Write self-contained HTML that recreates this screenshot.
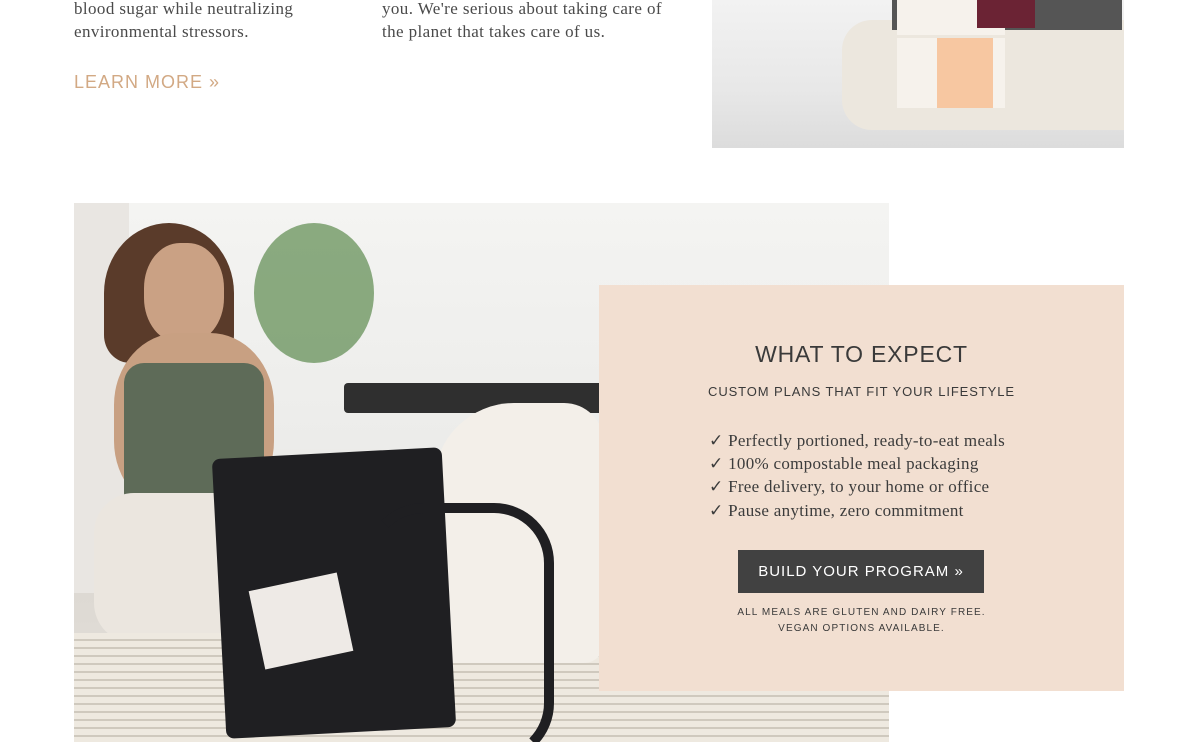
<!DOCTYPE html>
<html><head><style>
body{margin:0;width:1200px;height:742px;background:#fff;position:relative;overflow:hidden;font-family:"Liberation Serif",serif;color:#444}
.p{position:absolute;font-size:17px;line-height:23px;letter-spacing:.4px;color:#4a4a4a}
.sans{font-family:"Liberation Sans",sans-serif}
</style></head><body>
<div class="p" style="left:74px;top:-3px">blood sugar while neutralizing<br>environmental stressors.</div>
<div class="p" style="left:382px;top:-3px">you. We're serious about taking care of<br>the planet that takes care of us.</div>
<div class="sans" style="position:absolute;left:74px;top:72px;font-size:18px;letter-spacing:1px;color:#d2a984">LEARN MORE »</div>
<!-- top right photo -->
<div style="position:absolute;left:712px;top:0;width:412px;height:148px;background:linear-gradient(180deg,#f2f2f2,#e8e8e8 60%,#dcdcdc);overflow:hidden">
<div style="position:absolute;left:130px;top:20px;width:290px;height:110px;background:#ece7de;border-radius:30px 0 0 30px"></div>
<div style="position:absolute;left:180px;top:0;width:230px;height:30px;background:#555"></div>
<div style="position:absolute;left:185px;top:0;width:108px;height:35px;background:#f6f2ec"></div>
<div style="position:absolute;left:265px;top:0;width:58px;height:28px;background:#6b2334"></div>
<div style="position:absolute;left:185px;top:38px;width:108px;height:70px;background:#f6f2ec"></div>
<div style="position:absolute;left:225px;top:38px;width:56px;height:70px;background:#f7c7a1"></div>
</div>
<!-- big photo -->
<div style="position:absolute;left:74px;top:203px;width:815px;height:539px;background:linear-gradient(180deg,#f4f4f2 0%,#ececea 45%,#dcd8d2 70%,#e6e2dc 100%);overflow:hidden">
<div style="position:absolute;left:0;top:0;width:55px;height:390px;background:#e9e6e2"></div>
<div style="position:absolute;left:180px;top:20px;width:120px;height:140px;background:#5c8a4e;border-radius:50%;opacity:.7"></div>
<div style="position:absolute;left:270px;top:180px;width:260px;height:30px;background:#2f2f2f;border-radius:4px"></div>
<div style="position:absolute;left:30px;top:20px;width:130px;height:140px;background:#5a3b2a;border-radius:50% 50% 20% 20%"></div>
<div style="position:absolute;left:70px;top:40px;width:80px;height:100px;background:#caa184;border-radius:45%"></div>
<div style="position:absolute;left:40px;top:130px;width:160px;height:180px;background:#c8a082;border-radius:40%"></div>
<div style="position:absolute;left:50px;top:160px;width:140px;height:150px;background:#5e6b58;border-radius:20px"></div>
<div style="position:absolute;left:20px;top:290px;width:250px;height:150px;background:#ebe6df;border-radius:40px"></div>
<div style="position:absolute;left:0;top:430px;width:815px;height:110px;background:repeating-linear-gradient(0deg,#eee9e0 0 6px,#cfc9be 6px 8px)"></div>
<div style="position:absolute;left:360px;top:200px;width:170px;height:260px;background:#f3efe9;border-radius:80px 40px 20px 20px"></div>
<div style="position:absolute;left:145px;top:250px;width:230px;height:280px;background:#1f1f22;transform:rotate(-3deg);border-radius:8px"></div>
<div style="position:absolute;left:290px;top:300px;width:170px;height:240px;border:10px solid #1f1f22;border-radius:60px;border-left-color:transparent;border-bottom-color:transparent"></div>
<div style="position:absolute;left:182px;top:378px;width:90px;height:80px;background:#eeeae6;transform:rotate(-12deg)"></div>
</div>
<!-- box -->
<div style="position:absolute;left:599px;top:285px;width:525px;height:406px;background:#f2dfd1"></div>
<div class="sans" style="position:absolute;left:599px;top:341px;width:525px;text-align:center;font-size:23px;letter-spacing:0.8px;color:#3a3a3a">WHAT TO EXPECT</div>
<div class="sans" style="position:absolute;left:599px;top:384px;width:525px;text-align:center;font-size:13px;letter-spacing:0.9px;color:#3a3a3a">CUSTOM PLANS THAT FIT YOUR LIFESTYLE</div>
<div class="p" style="left:709px;top:429px;font-size:17px;line-height:23.2px;color:#3c3c3c;letter-spacing:.3px">✓ Perfectly portioned, ready-to-eat meals<br>✓ 100% compostable meal packaging<br>✓ Free delivery, to your home or office<br>✓ Pause anytime, zero commitment</div>
<div class="sans" style="position:absolute;left:738px;top:550px;width:246px;height:43px;background:#414141;color:#fff;text-align:center;line-height:43px;font-size:15px;letter-spacing:1px">BUILD YOUR PROGRAM »</div>
<div class="sans" style="position:absolute;left:599px;top:605px;width:525px;text-align:center;font-size:10px;line-height:16px;letter-spacing:1.1px;color:#3a3a3a">ALL MEALS ARE GLUTEN AND DAIRY FREE.<br>VEGAN OPTIONS AVAILABLE.</div>
</body></html>
